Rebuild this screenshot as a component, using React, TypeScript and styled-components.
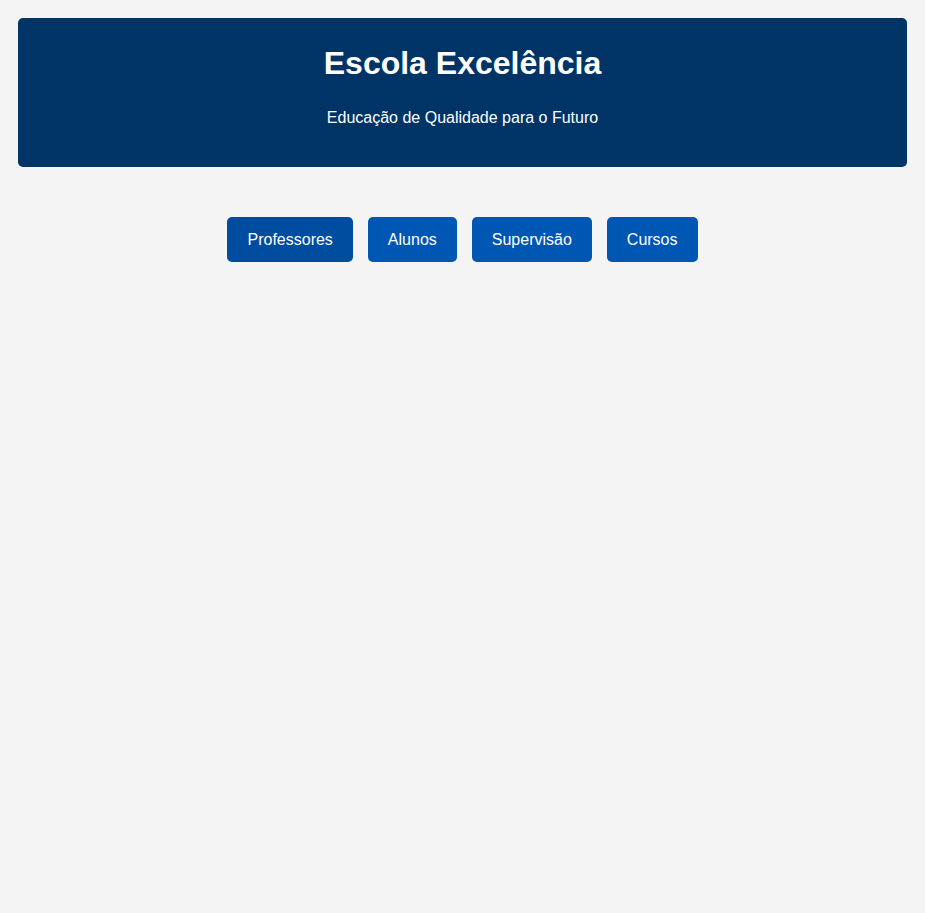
import React, { useState } from "react";
import styled, { createGlobalStyle } from "styled-components";

const Global = createGlobalStyle`
  html, body { margin: 0; padding: 0; background: #f4f4f4; }
  body { font-family: "Liberation Sans", Arial, sans-serif; }
`;

const Page = styled.div`
  padding: 18px;
`;

const Header = styled.header`
  background: #003366;
  color: #ffffff;
  border-radius: 5px;
  text-align: center;
  padding: 27px 20px 40px;
`;

const Title = styled.h1`
  margin: 0 0 27px;
  font-size: 32px;
  line-height: 37px;
  font-weight: bold;
`;

const Subtitle = styled.p`
  margin: 0;
  font-size: 16px;
  line-height: 18px;
`;

const Nav = styled.nav`
  display: flex;
  justify-content: center;
  gap: 15px;
  margin-top: 50px;
`;

const NavButton = styled.button<{ $active?: boolean }>`
  height: 45px;
  padding: 0 20px;
  border: none;
  border-radius: 5px;
  background: ${(p) => (p.$active ? "#004c9e" : "#0056b3")};
  color: #ffffff;
  font-family: "Liberation Sans", Arial, sans-serif;
  font-size: 16px;
  cursor: pointer;
`;

const items = ["Professores", "Alunos", "Supervisão", "Cursos"];

export default function App() {
  const [active, setActive] = useState(0);
  return (
    <Page>
      <Global />
      <Header>
        <Title>Escola Excelência</Title>
        <Subtitle>Educação de Qualidade para o Futuro</Subtitle>
      </Header>
      <Nav>
        {items.map((it, i) => (
          <NavButton key={it} $active={i === active} onClick={() => setActive(i)}>
            {it}
          </NavButton>
        ))}
      </Nav>
    </Page>
  );
}
